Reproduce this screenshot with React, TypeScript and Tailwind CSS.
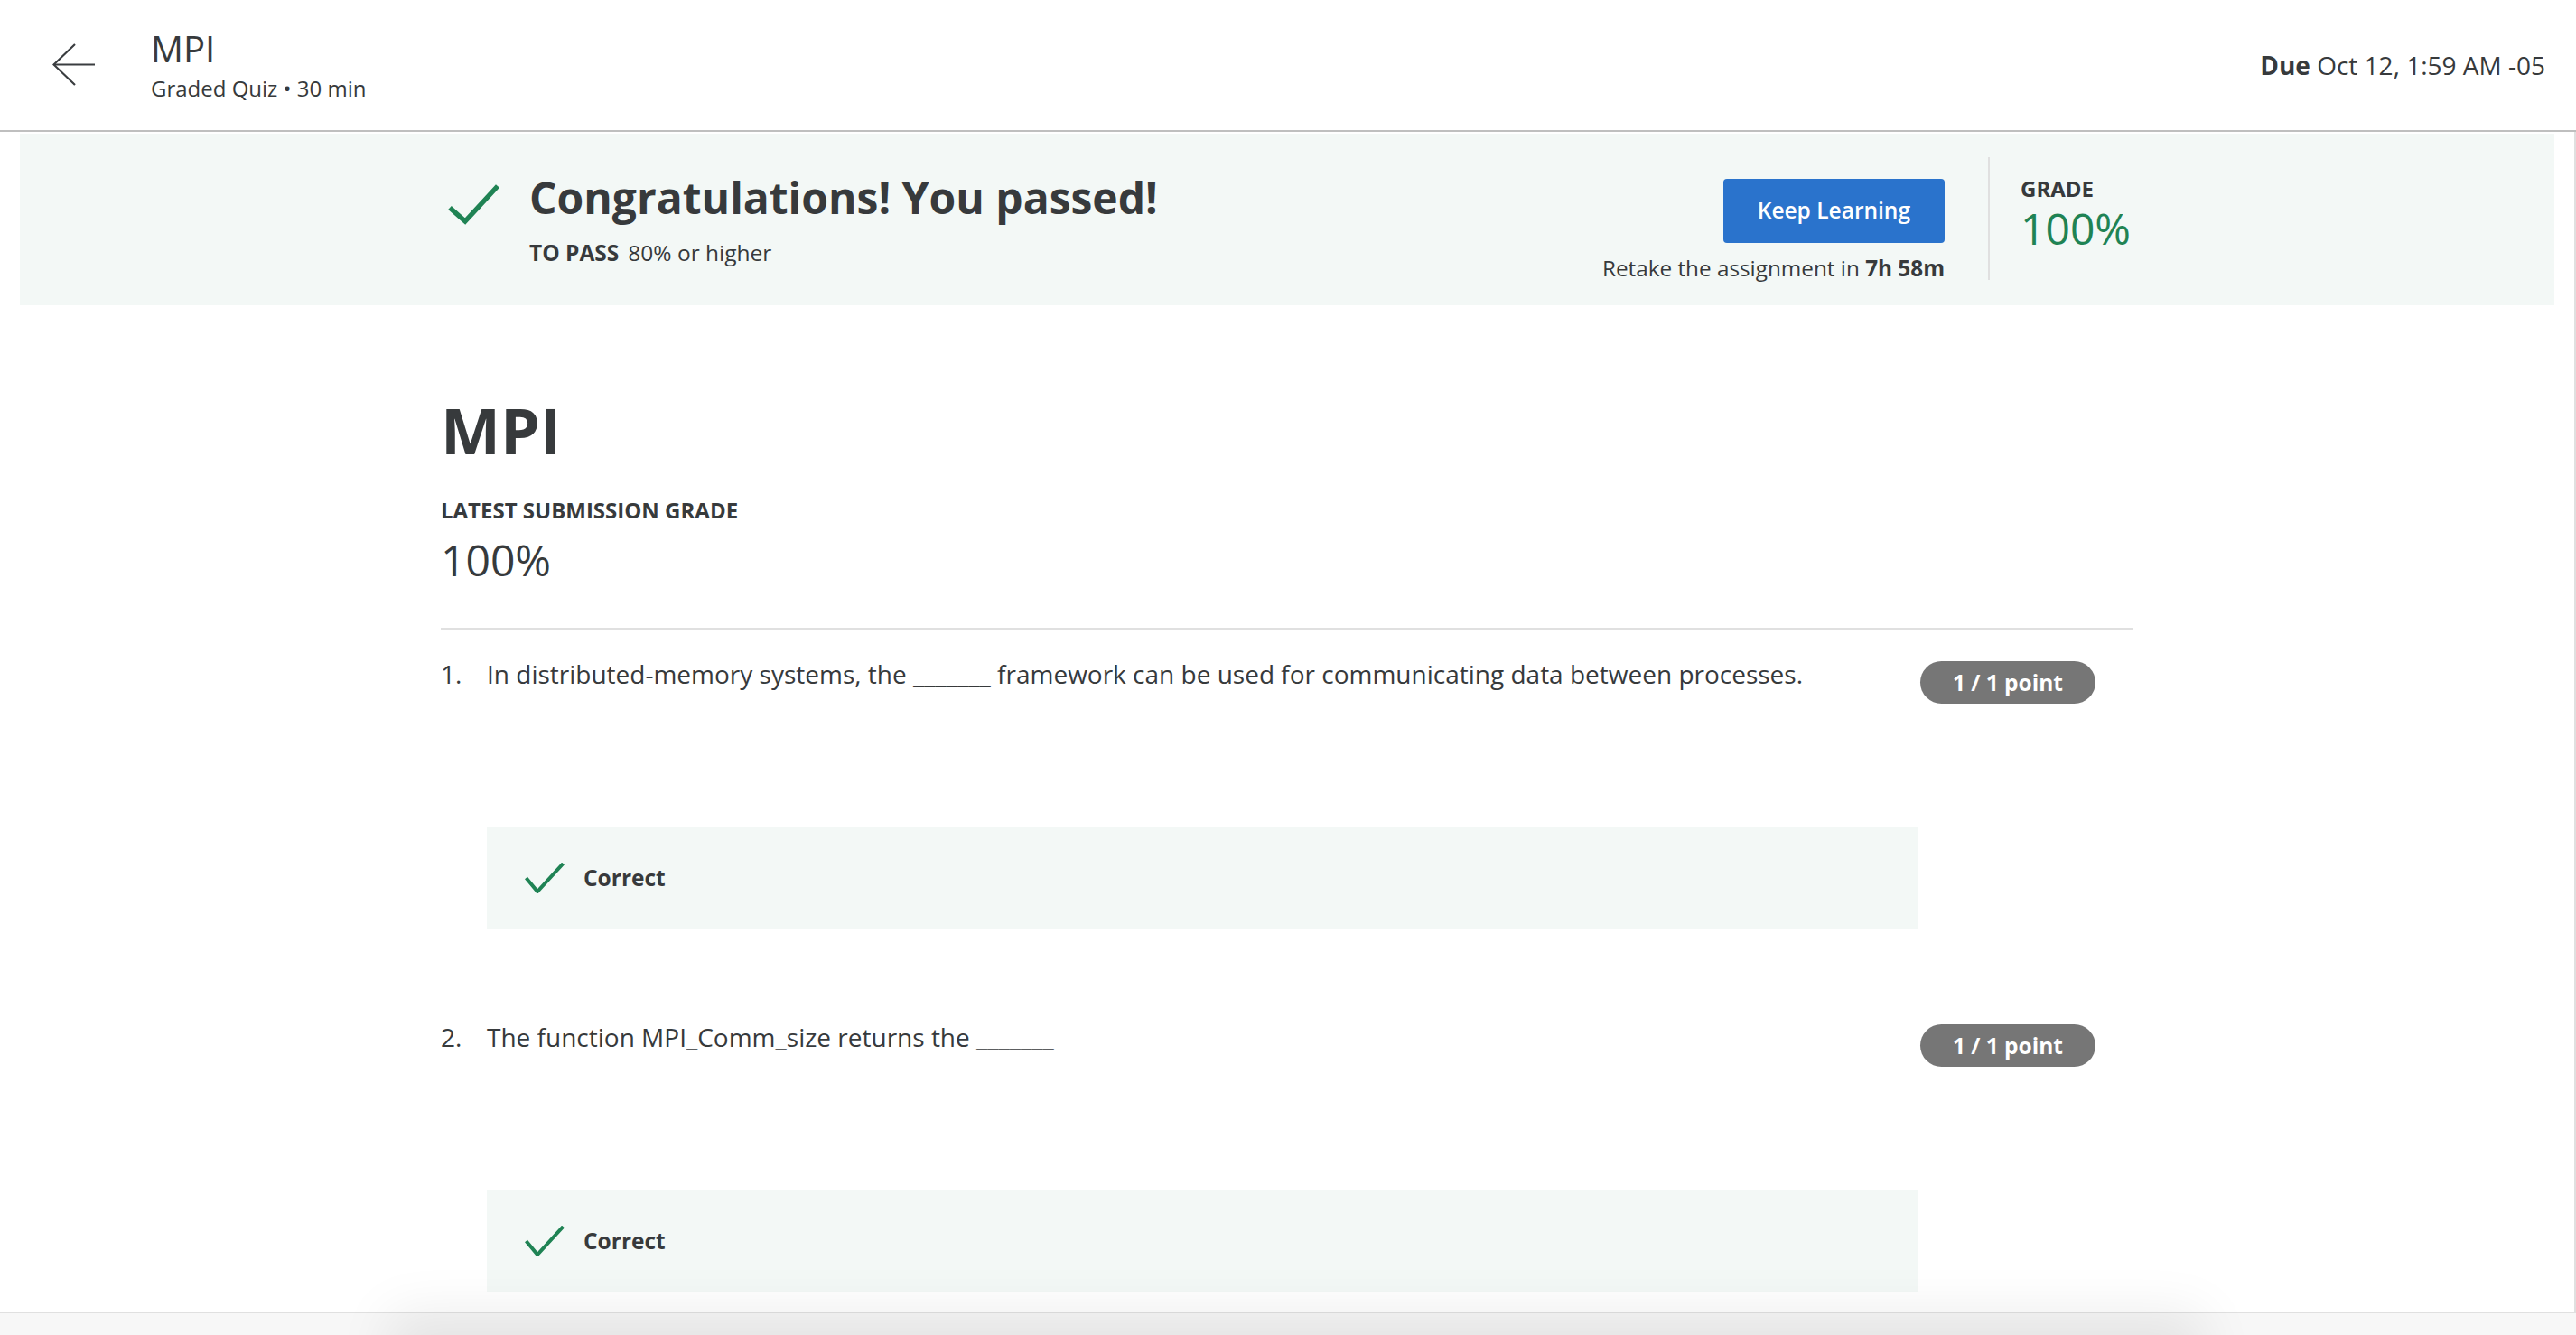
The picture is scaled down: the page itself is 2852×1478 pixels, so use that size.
import React from 'react';

const ink = 'text-[#373a3c]';

const BackArrow: React.FC = () => (
  <svg width="48" height="48" viewBox="0 0 48 48" fill="none" className="shrink-0">
    <polyline points="25,1 1.5,23.5 25,46" stroke="#3a3d40" strokeWidth="2.2" />
    <line x1="1.5" y1="23.5" x2="47" y2="23.5" stroke="#3a3d40" strokeWidth="2.2" />
  </svg>
);

const BigCheck: React.FC = () => (
  <svg width="58" height="46" viewBox="0 0 58 46" fill="none" className="shrink-0">
    <polyline points="2,27 19,42 55,3" stroke="#1f8354" strokeWidth="5.5" />
  </svg>
);

const SmallCheck: React.FC = () => (
  <svg width="44" height="34" viewBox="0 0 44 34" fill="none" className="shrink-0">
    <polyline points="1.5,17 14,32 42.5,1" stroke="#1f8354" strokeWidth="4" />
  </svg>
);

interface QuestionProps {
  num: number;
  text: string;
  first?: boolean;
}

const Question: React.FC<QuestionProps> = ({ num, text, first }) => (
  <div className={`${first ? 'mt-[29px]' : 'mt-[100px]'} pr-[42px] grid grid-cols-[51px_1fr_auto]`}>
    <div className="text-[28px] leading-[40px]">{num}.</div>
    <div className="text-[28px] leading-[40px] pr-[10px]">{text}</div>
    <div className="mt-[6px] h-[47px] px-[36px] rounded-full bg-[#767676] text-white text-[24.5px] leading-[47px] font-bold whitespace-nowrap">
      1 / 1 point
    </div>
    <div />
    <div className="mt-[137px] mr-[2px] h-[112px] bg-[#f3f8f6] flex items-center pl-[42px]">
      <SmallCheck />
      <span className="ml-[21px] text-[24.5px] leading-[32px] font-bold">Correct</span>
    </div>
    <div />
  </div>
);

const App: React.FC = () => {
  return (
    <div className={`w-full h-[1478px] overflow-hidden bg-[#f7f7f7] font-['Open_Sans',sans-serif] ${ink} flex flex-col`}>
      <header className="h-[146px] shrink-0 bg-white border-b-2 border-[#bfbfbf] flex items-center pl-[58px] pr-[34px]">
        <BackArrow />
        <div className="ml-[61px]">
          <div className="text-[40px] leading-[48px]">MPI</div>
          <div className="mt-[4px] text-[24px] leading-[32px]">Graded Quiz • 30 min</div>
        </div>
        <div className="ml-auto text-[28px] leading-[36px]">
          <span className="font-bold">Due</span> Oct 12, 1:59 AM -05
        </div>
      </header>

      <main className="h-[1308px] shrink-0 overflow-hidden bg-white border-r-2 border-b-2 border-[#e0e0e0]">
        <div className="mt-[2px] mx-[22px] h-[190px] bg-[#f3f8f6]">
          <div className="w-[1874px] mx-auto flex items-start">
            <div className="mt-[41px] flex items-start">
              <div className="ml-[8px] mt-[14px] mr-[32px]">
                <BigCheck />
              </div>
              <div>
                <h2 className="text-[48px] leading-[60px] font-bold">Congratulations! You passed!</h2>
                <p className="mt-[15px] text-[24.5px] leading-[32px]">
                  <span className="font-bold">TO PASS</span>
                  <span className="ml-[10px]">80% or higher</span>
                </p>
              </div>
            </div>

            <div className="ml-auto flex items-start">
              <div className="mt-[50px] flex flex-col items-end">
                <button className="h-[71px] px-[38px] rounded-[4px] bg-[#2a73cc] text-white text-[24.5px] font-semibold">
                  Keep Learning
                </button>
                <div className="mt-[12px] text-[24.3px] leading-[32px]">
                  Retake the assignment in <span className="font-bold">7h 58m</span>
                </div>
              </div>
              <div className="mt-[26px] h-[136px] w-[2px] bg-[#e0e0e0] ml-[48px] mr-[34px]" />
              <div className="mt-[45px] w-[125px]">
                <div className="text-[24px] leading-[32px] font-bold">GRADE</div>
                <div className="text-[48px] leading-[56px] font-normal text-[#1f8354]">100%</div>
              </div>
            </div>
          </div>
        </div>

        <section className="w-[1874px] mx-auto pt-[96px]">
          <h1 className="text-[70px] leading-[84px] font-bold">MPI</h1>
          <div className="mt-[31px] text-[24px] leading-[32px] font-bold">LATEST SUBMISSION GRADE</div>
          <div className="mt-[11px] text-[48px] leading-[56px] font-normal">100%</div>
          <div className="mt-[47px] h-[2px] bg-[#e0e0e0]" />

          <Question
            first
            num={1}
            text="In distributed-memory systems, the _______ framework can be used for communicating data between processes."
          />
          <Question num={2} text="The function MPI_Comm_size returns the _______" />
        </section>
      </main>

      <div className="fixed left-[455px] bottom-[-70px] w-[1960px] h-[70px] bg-[#e4e4e4] shadow-[0_0_60px_24px_rgba(0,0,0,0.08)]" />
    </div>
  );
};

export default App;
